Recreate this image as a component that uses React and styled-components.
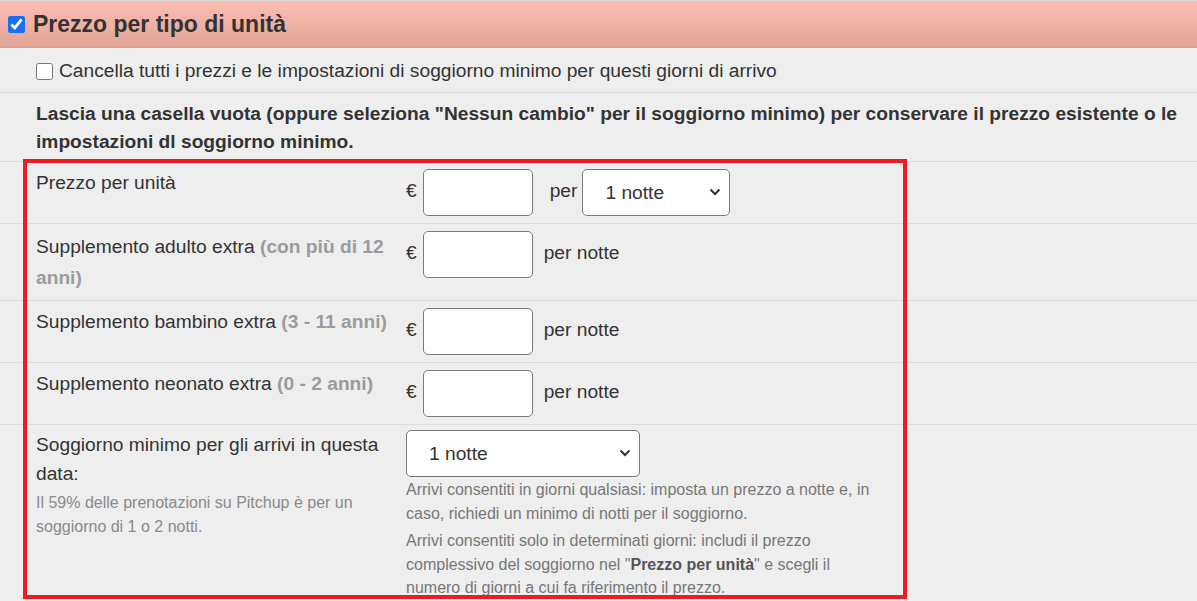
import * as React from "react";
import styled, { createGlobalStyle } from "styled-components";

const GlobalStyle = createGlobalStyle`
  html, body {
    margin: 0;
    padding: 0;
    background: #eeeeee;
  }
  body {
    font-family: "Liberation Sans", Arial, sans-serif;
    color: #333;
    font-size: 19.2px;
  }
  * {
    box-sizing: border-box;
  }
`;

const Page = styled.div`
  width: 1197px;
  overflow: hidden;
`;

const Header = styled.div`
  display: flex;
  align-items: center;
  gap: 8px;
  height: 48px;
  padding: 0 0 0 8px;
  border-top: 1px solid #d9d9d9;
  border-bottom: 1px solid #d9a092;
  background: linear-gradient(to bottom, #fdbeb1, #e0a596);
`;

const Title = styled.h2`
  margin: 0;
  font-size: 23px;
  font-weight: bold;
  color: #333;
  line-height: 1;
`;

const CheckBox = styled.input.attrs({ type: "checkbox" })`
  width: 17px;
  height: 17px;
  margin: 0;
  accent-color: #1a6ff0;
`;

const Row = styled.div`
  border-bottom: 1px solid #dcdcdc;
`;

const ClearRow = styled(Row)`
  display: flex;
  align-items: center;
  gap: 6px;
  height: 45px;
  padding: 2px 0 0 36px;
`;

const Notice = styled(Row)`
  padding: 7px 16px 5px 36px;
  font-weight: bold;
  line-height: 28px;
`;

const FieldTable = styled.div`
  position: relative;
`;

const FieldRow = styled(Row)`
  display: grid;
  grid-template-columns: 370px 1fr;
  align-items: start;
  padding: ${(p) => (p.$pad ? p.$pad : "7px 0 7px 36px")};
`;

const Label = styled.div`
  line-height: ${(p) => (p.$lh ? p.$lh : "28px")};
  padding-right: 12px;
`;

const Muted = styled.span`
  color: #9b9b9b;
  font-weight: bold;
`;

const Hint = styled.div`
  margin-top: 3px;
  font-size: 16px;
  line-height: 24px;
  color: #8a8a8a;
  padding-right: 20px;
`;

const Controls = styled.div`
  display: flex;
  align-items: center;
`;

const Euro = styled.span`
  margin-right: 6px;
  margin-top: -4px;
`;

const PriceInput = styled.input.attrs({ type: "text" })`
  width: 110px;
  height: 47px;
  border: 1px solid #7a7a7a;
  border-radius: 5px;
  background: #fff;
  font: inherit;
  padding: 0 8px;
`;

const Unit = styled.span`
  margin-left: ${(p) => (p.$gap ? p.$gap : "11px")};
  margin-right: 5px;
  margin-top: -4px;
`;

const SelectWrap = styled.div`
  position: relative;
  width: ${(p) => p.$w}px;
  height: 47px;
`;

const Select = styled.select`
  appearance: none;
  width: 100%;
  height: 100%;
  border: 1px solid #7a7a7a;
  border-radius: 5px;
  background: #fff;
  color: #333;
  font: inherit;
  padding: 0 0 0 22px;
`;

const Chevron = styled.svg`
  position: absolute;
  right: 9px;
  top: 19px;
  pointer-events: none;
`;

const Help = styled.div`
  width: 476px;
  margin-top: 1px;
  font-size: 16px;
  color: #777;
  line-height: 23.5px;
`;

const HelpPara = styled.p`
  margin: 0 0 4px;
  b {
    color: #555;
  }
`;

const Highlight = styled.div`
  position: absolute;
  top: -3px;
  left: 23px;
  width: 884px;
  height: 440px;
  border: 4px solid #ed1c24;
  pointer-events: none;
`;

function NightSelect({ width }) {
  return (
    <SelectWrap $w={width}>
      <Select defaultValue="1">
        <option value="1">1 notte</option>
        <option value="2">2 notti</option>
        <option value="3">3 notti</option>
        <option value="7">7 notti</option>
      </Select>
      <Chevron width="12" height="8" viewBox="0 0 12 8">
        <path d="M1.5 1.5 L6 6 L10.5 1.5" fill="none" stroke="#333" strokeWidth="2" />
      </Chevron>
    </SelectWrap>
  );
}

function PriceField({ unit, gap, children }) {
  return (
    <Controls>
      <Euro>€</Euro>
      <PriceInput />
      <Unit $gap={gap}>{unit}</Unit>
      {children}
    </Controls>
  );
}

export default function App() {
  return (
    <Page>
      <GlobalStyle />
      <Header>
        <CheckBox defaultChecked />
        <Title>Prezzo per tipo di unità</Title>
      </Header>
      <ClearRow>
        <CheckBox />
        <span>Cancella tutti i prezzi e le impostazioni di soggiorno minimo per questi giorni di arrivo</span>
      </ClearRow>
      <Notice>
        Lascia una casella vuota (oppure seleziona "Nessun cambio" per il soggiorno minimo) per conservare il prezzo
        esistente o le impostazioni dl soggiorno minimo.
      </Notice>
      <FieldTable>
        <FieldRow>
          <Label>Prezzo per unità</Label>
          <PriceField unit="per" gap="17px">
            <NightSelect width={148} />
          </PriceField>
        </FieldRow>
        <FieldRow>
          <Label $lh="31px">
            Supplemento adulto extra <Muted>(con più di 12 anni)</Muted>
          </Label>
          <PriceField unit="per notte" />
        </FieldRow>
        <FieldRow>
          <Label>
            Supplemento bambino extra <Muted>(3 - 11 anni)</Muted>
          </Label>
          <PriceField unit="per notte" />
        </FieldRow>
        <FieldRow>
          <Label>
            Supplemento neonato extra <Muted>(0 - 2 anni)</Muted>
          </Label>
          <PriceField unit="per notte" />
        </FieldRow>
        <FieldRow $pad="5px 0 4px 36px">
          <div>
            <Label $lh="29px">Soggiorno minimo per gli arrivi in questa data:</Label>
            <Hint>Il 59% delle prenotazioni su Pitchup è per un soggiorno di 1 o 2 notti.</Hint>
          </div>
          <div>
            <NightSelect width={234} />
            <Help>
              <HelpPara>
                Arrivi consentiti in giorni qualsiasi: imposta un prezzo a notte e, in caso, richiedi un minimo di
                notti per il soggiorno.
              </HelpPara>
              <HelpPara>
                Arrivi consentiti solo in determinati giorni: includi il prezzo complessivo del soggiorno nel "
                <b>Prezzo per unità</b>" e scegli il numero di giorni a cui fa riferimento il prezzo.
              </HelpPara>
            </Help>
          </div>
        </FieldRow>
        <Highlight />
      </FieldTable>
    </Page>
  );
}
